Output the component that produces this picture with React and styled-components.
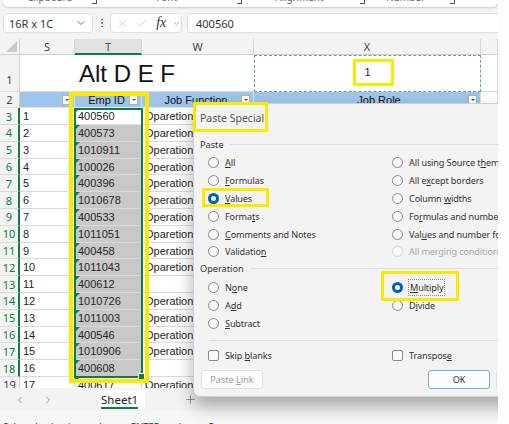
import React from 'react'
import styled, { createGlobalStyle, css } from 'styled-components'
import { ChevronDown, ChevronLeft, ChevronRight, EllipsisVertical, X, Check, Plus } from 'lucide-react'

const UI = `"Noto Sans", "Segoe UI", Arial, sans-serif`
const CELL = `"Liberation Sans", Arial, sans-serif`
const GREEN = '#107c41'
const YELLOW = '#f8ea00'
const GRID = '#dadada'

const GlobalStyle = createGlobalStyle`
  html, body { margin: 0; padding: 0; background: #fdfdfd; }
  body { overflow: hidden; }
`

const rows = [
  [1, '400560', 'Oparetion'],
  [2, '400573', 'Oparetion'],
  [3, '1010911', 'Operation'],
  [4, '100026', 'Operation'],
  [5, '400396', 'Operation'],
  [6, '1010678', 'Operation'],
  [7, '400533', 'Operation'],
  [8, '1011051', 'Oparetion'],
  [9, '400458', 'Operation'],
  [10, '1011043', 'Oparetion'],
  [11, '400612', ''],
  [12, '1010726', 'Operation'],
  [13, '1011003', 'Operation'],
  [14, '400546', 'Operation'],
  [15, '1010906', 'Operation'],
  [16, '400608', ''],
  [17, '400617', 'Operation'],
]

const Window = styled.div`
  position: relative;
  width: 498px;
  height: 424px;
  overflow: hidden;
  background: #f3f3f3;
  display: flex;
  flex-direction: column;
  font-family: ${UI};
`

/* ribbon (cut off at the top) */
const Ribbon = styled.div`
  margin-left: 3px;
  height: 7px;
  flex: none;
  background: #fff;
  border-radius: 0 0 6px 6px;
  box-shadow: 0 1px 2px rgba(0, 0, 0, 0.18);
  display: flex;
  overflow: hidden;
`
const RibbonGroup = styled.div`
  width: ${p => p.$w}px;
  display: flex;
  align-items: flex-start;
  justify-content: space-between;
  padding: 0 6px 0 ${p => p.$pad}px;
  box-sizing: border-box;
  span {
    font-size: 10px;
    color: #666;
    line-height: 12px;
    margin-top: -9px;
  }
  i {
    width: 4px;
    height: 4px;
    margin-top: -1px;
    border-right: 1px solid #555;
    border-bottom: 1px solid #555;
  }
`

/* formula bar */
const FormulaBar = styled.div`
  margin-top: 6px;
  height: 20px;
  flex: none;
  display: flex;
  align-items: stretch;
  padding-left: 3px;
`
const Box = styled.div`
  background: #fff;
  border: 1px solid #e1e1e1;
  border-radius: 4px;
  box-sizing: border-box;
  display: flex;
  align-items: center;
  font-size: 11px;
  color: #333;
`
const NameBox = styled(Box)`
  width: 90px;
  justify-content: space-between;
  padding: 0 5px 0 5px;
`
const Dots = styled.div`
  width: 17px;
  display: flex;
  align-items: center;
  justify-content: center;
  color: #666;
`
const FxBox = styled(Box)`
  width: 72px;
  padding-left: 5px;
  gap: 6px;
  color: #c4c4c4;
`
const Fx = styled.span`
  font-family: "Liberation Serif", "DejaVu Serif", serif;
  font-style: italic;
  font-size: 14px;
  color: #333;
  margin-left: 3px;
`
const Input = styled(Box)`
  flex: 1;
  margin-left: 5px;
  padding-left: 8px;
  border-right: none;
  border-radius: 4px 0 0 4px;
`

/* sheet */
const Sheet = styled.div`
  margin-top: 6px;
  height: 349px;
  flex: none;
  overflow: hidden;
  display: grid;
  grid-template-columns: 20px 55px 67px 112px 227px 17px;
  grid-template-rows: 16px 36.5px repeat(18, 16.8px);
  background: #fff;
`
const Corner = styled.div`
  background: #f3f3f3;
  border-right: 1px solid #d0d0d0;
  border-bottom: 1px solid #d0d0d0;
  position: relative;
  &::after {
    content: '';
    position: absolute;
    right: 2px;
    bottom: 2px;
    border-left: 11px solid transparent;
    border-bottom: 11px solid #c9c9c9;
  }
`
const ColHead = styled.div`
  box-sizing: border-box;
  background: ${p => (p.$active ? '#e1e1e1' : '#f3f3f3')};
  border-right: 1px solid #d6d6d6;
  border-bottom: ${p => (p.$active ? `2px solid ${GREEN}` : '1px solid #d0d0d0')};
  color: ${p => (p.$active ? GREEN : '#444')};
  font: 11px ${UI};
  display: flex;
  align-items: center;
  justify-content: center;
`
const RowHead = styled.div`
  box-sizing: border-box;
  background: #f3f3f3;
  border-bottom: 1px solid #d9d9d9;
  border-right: ${p => (p.$active ? `2px solid ${GREEN}` : '1px solid #d0d0d0')};
  color: ${p => (p.$active ? GREEN : '#444')};
  font: 11px ${UI};
  display: flex;
  justify-content: center;
  align-items: ${p => (p.$bottom ? 'flex-end' : 'center')};
  padding-bottom: ${p => (p.$bottom ? 4 : 0)}px;
`
const Cell = styled.div`
  position: relative;
  box-sizing: border-box;
  min-width: 0;
  border-right: 1px solid ${GRID};
  border-bottom: 1px solid ${GRID};
  background: ${p => p.$fill || '#fff'};
  font: 11px ${CELL};
  color: #262626;
  padding: 0 3px;
  display: flex;
  align-items: center;
  white-space: nowrap;
  ${p =>
    p.$flag &&
    css`
      &::before {
        content: '';
        position: absolute;
        left: 0;
        top: 0;
        border-top: 5px solid #1d7a46;
        border-right: 5px solid transparent;
      }
    `}
`
const Title = styled(Cell)`
  grid-column: span 3;
  border-right: none;
  font-size: 24px;
  line-height: 24px;
  color: #111;
  padding: 3px 0 0 59px;
`
const Copied = styled(Cell)`
  justify-content: center;
  border: 1.5px dashed #6f9f8c;
  padding-bottom: 2px;
`
const HeadCell = styled(Cell)`
  background: #9fc5ea;
  justify-content: center;
  padding-left: ${p => p.$pad || 0}px;
  padding-top: 1px;
  color: #111;
  border-color: #d7e4f1;
`
const FilterBtn = styled.span`
  position: absolute;
  right: 3px;
  top: 3px;
  width: 9px;
  height: 10px;
  box-sizing: border-box;
  background: #fff;
  border: 1px solid #b0b0b0;
  &::after {
    content: '';
    position: absolute;
    left: 2px;
    top: 3px;
    border-left: 2px solid transparent;
    border-right: 2px solid transparent;
    border-top: 2px solid #555;
  }
`

/* tabs + status */
const TabBar = styled.div`
  height: 23px;
  flex: none;
  display: flex;
  align-items: center;
  padding-left: 14px;
  color: #9a9a9a;
  background: #f3f3f3;
`
const SheetTab = styled.div`
  height: 19px;
  margin-left: 44px;
  padding: 0 7px 0 3px;
  background: #fff;
  display: flex;
  align-items: flex-end;
  span {
    font-size: 11.5px;
    color: #222;
    line-height: 15px;
    border-bottom: 2px solid ${GREEN};
  }
`
const AddSheet = styled.div`
  margin-left: 39px;
  display: flex;
  color: #777;
`
const StatusBar = styled.div`
  flex: none;
  height: 30px;
  box-sizing: border-box;
  padding: 10px 0 0 3px;
  font-size: 9.5px;
  line-height: 12px;
  color: #333;
  background: #f7f7f7;
  white-space: nowrap;
`

/* dialog */
const Dialog = styled.div`
  position: absolute;
  left: 193px;
  top: 103px;
  width: 372px;
  height: 294px;
  box-sizing: border-box;
  background: #f3f3f3;
  border: 1px solid #cfcfcf;
  border-radius: 7px;
  box-shadow: 0 9px 18px rgba(0, 0, 0, 0.32);
  display: flex;
  flex-direction: column;
  z-index: 2;
  font-family: ${UI};
  color: #222;
`
const DialogTitle = styled.div`
  height: 27px;
  padding-left: 6px;
  display: flex;
  align-items: center;
  font-size: 10.5px;
  color: #555;
`
const Section = styled.div`
  height: 12px;
  margin: ${p => p.$top}px 0 0 6px;
  display: flex;
  align-items: center;
  gap: 6px;
  font-size: 9.2px;
  color: #333;
  &::after {
    content: '';
    flex: 1;
    border-top: 1px solid #dddddd;
  }
`
const Options = styled.div`
  margin-top: ${p => p.$top}px;
  padding-left: 14px;
  display: grid;
  grid-template-columns: 184px 1fr;
  grid-auto-rows: 17.8px;
`
const Option = styled.label`
  display: flex;
  align-items: center;
  gap: 6px;
  font-size: 9.1px;
  letter-spacing: -0.12px;
  white-space: nowrap;
  color: ${p => (p.$disabled ? '#a9a9a9' : '#333')};
`
const Radio = styled.span`
  width: 11px;
  height: 11px;
  flex: none;
  box-sizing: border-box;
  border-radius: 50%;
  border: 1px solid ${p => (p.$disabled ? '#d6d6d6' : '#8a8a8a')};
  background: #fafafa;
  position: relative;
  ${p =>
    p.$on &&
    css`
      border: none;
      background: #005fb8;
      &::after {
        content: '';
        position: absolute;
        left: 3px;
        top: 3px;
        width: 5px;
        height: 5px;
        border-radius: 50%;
        background: #fff;
      }
    `}
`
const CheckBox = styled.span`
  width: 11px;
  height: 11px;
  flex: none;
  box-sizing: border-box;
  border-radius: 2px;
  border: 1px solid #8a8a8a;
  background: #fafafa;
`
const Focus = styled.span`
  outline: 1px dotted #8d8d8d;
  outline-offset: 1px;
  margin-left: 1px;
`
const Divider = styled.div`
  margin: 7.5px 0 0 15px;
  border-top: 1px solid #dddddd;
`
const Buttons = styled.div`
  margin-top: 6px;
  padding-left: 7px;
  display: flex;
  gap: 6px;
`
const Button = styled.div`
  width: 62px;
  height: 19px;
  flex: none;
  box-sizing: border-box;
  border-radius: 3px;
  background: #fcfcfc;
  border: 1px solid ${p => (p.$focus ? '#7fa9d6' : '#e2e2e2')};
  display: flex;
  align-items: center;
  justify-content: center;
  font-size: 9.1px;
  color: ${p => (p.$disabled ? '#9f9f9f' : '#333')};
  margin-left: ${p => p.$gap || 0}px;
`
const Acc = styled.span`
  text-decoration: underline;
  text-underline-offset: 1px;
`

/* overlays: yellow annotation boxes and the selection */
const Mark = styled.div`
  position: absolute;
  left: ${p => p.$x}px;
  top: ${p => p.$y}px;
  width: ${p => p.$w}px;
  height: ${p => p.$h}px;
  box-sizing: border-box;
  border: ${p => p.$t}px solid ${YELLOW};
  z-index: 3;
`
const Selection = styled.div`
  position: absolute;
  left: 74px;
  top: 107.5px;
  width: 69px;
  height: 270.5px;
  box-sizing: border-box;
  border: 2px solid ${GREEN};
  z-index: 1;
  &::after {
    content: '';
    position: absolute;
    right: -4px;
    bottom: -4px;
    width: 5px;
    height: 5px;
    background: ${GREEN};
    border: 1px solid #fff;
  }
`

const acc = (text, i) =>
  i === undefined ? text : [text.slice(0, i), <Acc key="a">{text[i]}</Acc>, text.slice(i + 1)]

const pasteOptions = [
  ['All', 0], ['All using Source theme', 18],
  ['Formulas', 0], ['All except borders', 5],
  ['Values', 0, 'on'], ['Column widths', 7],
  ['Formats', 5], ['Formulas and number formats', 2],
  ['Comments and Notes', 0], ['Values and number formats', 3],
  ['Validation', 9], ['All merging conditional formats', undefined, 'off'],
]

export default function App() {
  return (
    <>
      <GlobalStyle />
      <Window>
        <Ribbon>
          <RibbonGroup $w={100} $pad={24}><span>Clipboard</span><i /></RibbonGroup>
          <RibbonGroup $w={145} $pad={53}><span>Font</span><i /></RibbonGroup>
          <RibbonGroup $w={123} $pad={27}><span>Alignment</span><i /></RibbonGroup>
          <RibbonGroup $w={90} $pad={15}><span>Number</span><i /></RibbonGroup>
        </Ribbon>

        <FormulaBar>
          <NameBox>16R x 1C<ChevronDown size={12} color="#666" /></NameBox>
          <Dots><EllipsisVertical size={12} /></Dots>
          <FxBox>
            <X size={13} strokeWidth={1.5} />
            <Check size={13} strokeWidth={1.5} />
            <Fx>fx</Fx>
            <ChevronDown size={9} color="#888" />
          </FxBox>
          <Input>400560</Input>
        </FormulaBar>

        <Sheet>
          <Corner />
          <ColHead>S</ColHead>
          <ColHead $active>T</ColHead>
          <ColHead>W</ColHead>
          <ColHead>X</ColHead>
          <ColHead />

          <RowHead $bottom>1</RowHead>
          <Title>Alt D E F</Title>
          <Copied>1</Copied>
          <Cell />

          <RowHead>2</RowHead>
          <HeadCell><FilterBtn /></HeadCell>
          <HeadCell>Emp ID<FilterBtn /></HeadCell>
          <HeadCell>Job Function<FilterBtn /></HeadCell>
          <HeadCell $pad={27}>Job Role<FilterBtn /></HeadCell>
          <Cell />

          {rows.map(([n, id, job], i) => (
            <React.Fragment key={n}>
              <RowHead $active={i < 16}>{i + 3}</RowHead>
              <Cell>{n}</Cell>
              <Cell $flag $fill={i > 0 && i < 16 ? '#c8c8c8' : undefined}>{id}</Cell>
              <Cell>{job}</Cell>
              <Cell />
              <Cell />
            </React.Fragment>
          ))}
        </Sheet>

        <TabBar>
          <ChevronLeft size={12} />
          <ChevronRight size={12} style={{ marginLeft: 16 }} />
          <SheetTab><span>Sheet1</span></SheetTab>
          <AddSheet><Plus size={13} strokeWidth={1.4} /></AddSheet>
        </TabBar>
        <StatusBar>Select destination and press ENTER or choose Paste</StatusBar>

        <Selection />

        <Dialog>
          <DialogTitle>Paste Special</DialogTitle>
          <Section $top={7}>Paste</Section>
          <Options $top={4}>
            {pasteOptions.map(([text, i, state]) => (
              <Option key={text} $disabled={state === 'off'}>
                <Radio $on={state === 'on'} $disabled={state === 'off'} />
                <span>{acc(text, i)}</span>
              </Option>
            ))}
          </Options>
          <Section $top={2}>Operation</Section>
          <Options $top={4}>
            <Option><Radio /><span>{acc('None', 1)}</span></Option>
            <Option><Radio $on /><Focus>{acc('Multiply', 0)}</Focus></Option>
            <Option><Radio /><span>{acc('Add', 1)}</span></Option>
            <Option><Radio /><span>{acc('Divide', 1)}</span></Option>
            <Option><Radio /><span>{acc('Subtract', 0)}</span></Option>
          </Options>
          <Divider />
          <Options $top={6}>
            <Option><CheckBox /><span>{acc('Skip blanks', 5)}</span></Option>
            <Option><CheckBox /><span>{acc('Transpose', 8)}</span></Option>
          </Options>
          <Buttons>
            <Button $disabled><span>{acc('Paste Link', 6)}</span></Button>
            <Button $focus $gap={159}><span>OK</span></Button>
            <Button><span>Cancel</span></Button>
          </Buttons>
        </Dialog>

        <Mark $x={353} $y={59} $w={41} $h={27} $t={3.5} />
        <Mark $x={69} $y={92} $w={80} $h={291} $t={4} />
        <Mark $x={193} $y={102} $w={75} $h={30} $t={3.5} />
        <Mark $x={202} $y={188} $w={67} $h={18.5} $t={3} />
        <Mark $x={381} $y={271} $w={78} $h={30} $t={3.5} />
      </Window>
    </>
  )
}
